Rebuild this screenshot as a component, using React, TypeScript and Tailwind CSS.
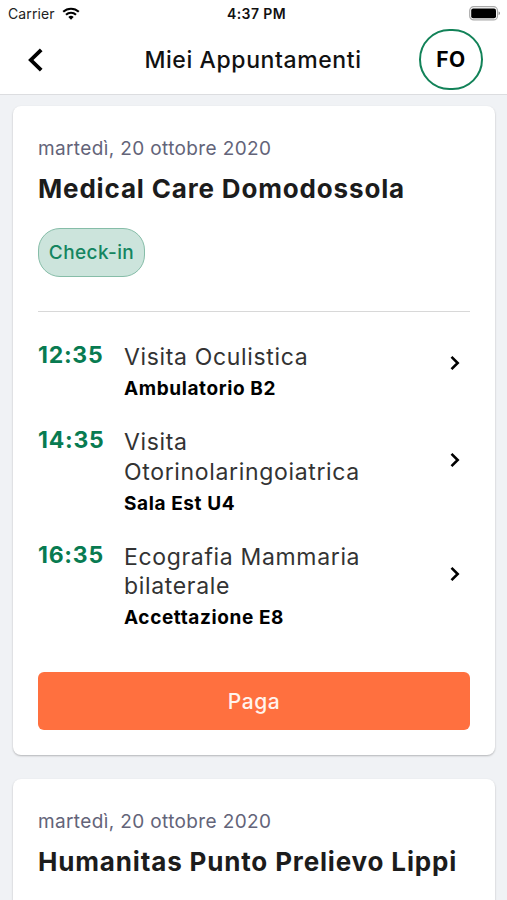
import clsx from "clsx"

type TVisit = {
  time: string;
  title: string[];
  room: string;
};

const visits: TVisit[] = [
  { time: "12:35", title: ["Visita Oculistica"], room: "Ambulatorio B2" },
  { time: "14:35", title: ["Visita", "Otorinolaringoiatrica"], room: "Sala Est U4" },
  { time: "16:35", title: ["Ecografia Mammaria", "bilaterale"], room: "Accettazione E8" },
];

const StatusBar = () => (
  <div className="relative flex h-[26px] items-center justify-between pl-[8px] pr-[7px] text-[14px]">
    <div className="flex items-center gap-[7px]">
      <span className="tracking-[0.1px] text-[#222]">Carrier</span>
      <svg className="h-[13px] w-[18px]" viewBox="0 0 18 13">
        <path d="M1.2 4.8a11.4 11.4 0 0 1 15.6 0M4 7.8a7.3 7.3 0 0 1 10 0" fill="none" stroke="#000" strokeWidth="2.1" />
        <path d="M9 12.8 6.3 10a4 4 0 0 1 5.4 0z" />
      </svg>
    </div>
    <span className="absolute left-[227px] font-semibold tracking-[0.4px] text-[#111]">4:37 PM</span>
    <svg className="h-[15px] w-[31px]" viewBox="0 0 31 15">
      <rect x="0.7" y="0.7" width="27.8" height="13.2" rx="4" fill="none" stroke="#aaa" strokeWidth="1.2" />
      <rect x="2.2" y="2.4" width="24.8" height="9.8" rx="2" />
      <path d="M29.7 5.6c1.5.5 1.5 3 0 3.5z" fill="#777" />
    </svg>
  </div>
);

const Header = () => (
  <header className="h-[95px] border-b border-[#dcdde0] bg-white">
    <StatusBar />
    <div className="flex h-[67px] items-center justify-between pl-[23px] pr-[24px]">
      <svg className="h-[26px] w-[26px]" viewBox="0 0 26 26" fill="none" stroke="#000" strokeWidth="3.8">
        <path d="M18.2 2.8 7.8 13l10.4 10.2" />
      </svg>
      <h1 className="ml-[38px] pt-[2px] text-[23px] font-medium tracking-[0.6px] text-[#111]">Miei Appuntamenti</h1>
      <div className="flex h-[61px] w-[64px] items-center justify-center rounded-full border-2 border-[#128258] pt-px text-[21px] font-bold tracking-[0.6px]">FO</div>
    </div>
  </header>
);

const Visit = ({ time, title, room }: TVisit) => (
  <li className="flex items-start">
    <span className="w-[86px] text-[23px] leading-[26px] font-bold tracking-[0.75px] text-[#087b51]">{time}</span>
    <div className="flex-1">
      <div className="pt-px text-[23px] leading-[29.3px] tracking-[0.66px] text-[#333]">
        {title.map((line) => <p key={line}>{line}</p>)}
      </div>
      <p className="mt-[4px] text-[19px] leading-[26.5px] font-bold tracking-[0.6px]">{room}</p>
    </div>
    <svg
      className={clsx("mr-[8px] h-[16px] w-[14px] self-center", title.length > 1 ? "mb-[25px]" : "mb-[19px]")}
      viewBox="0 0 14 16"
      fill="none"
      stroke="#000"
      strokeWidth="2.6"
    >
      <path d="m3.5 1.8 6.2 6.2-6.2 6.2" />
    </svg>
  </li>
);

const CardHeading = ({ date, place }: { date: string; place: string }) => (
  <div>
    <p className="text-[19px] leading-[26px] tracking-[0.37px] text-[#636479]">{date}</p>
    <h2 className="mt-[9px] text-[26px] leading-[36px] font-bold tracking-[0.84px] whitespace-nowrap text-[#1c1c1c]">{place}</h2>
  </div>
);

export default function App() {
  return (
    <div className="h-[900px] overflow-hidden bg-[#f0f2f5] font-[Inter,sans-serif] text-black">
      <Header />
      <main className="flex flex-col gap-6 pt-[11px] pr-[12px] pl-[13px]">
        <section className="h-[649px] rounded-lg bg-white px-[25px] pt-[30px] shadow-[0_1px_2px_rgba(0,0,0,0.25)]">
          <CardHeading date="martedì, 20 ottobre 2020" place="Medical Care Domodossola" />
          <div className="mt-[21px] flex h-[49px] w-[107px] items-center justify-center rounded-[22px] border border-[#86bda8] bg-[#cce4dc] pt-[2px] text-[19px] font-medium tracking-[0.4px] text-[#148560]">Check-in</div>
          <hr className="mt-[34px] border-[#d8d8d8]" />
          <ul className="mt-[30px] flex flex-col gap-[24.5px]">
            {visits.map((visit) => <Visit key={visit.time} {...visit} />)}
          </ul>
          <button className="mt-[40px] h-[58px] w-full rounded-md bg-[#ff703f] pt-px text-[21px] font-medium tracking-[0.6px] text-[#fff3ed]">Paga</button>
        </section>
        <section className="h-[200px] rounded-lg bg-white px-[25px] pt-[30px] shadow-[0_1px_2px_rgba(0,0,0,0.25)]">
          <CardHeading date="martedì, 20 ottobre 2020" place="Humanitas Punto Prelievo Lippi" />
        </section>
      </main>
    </div>
  );
}
